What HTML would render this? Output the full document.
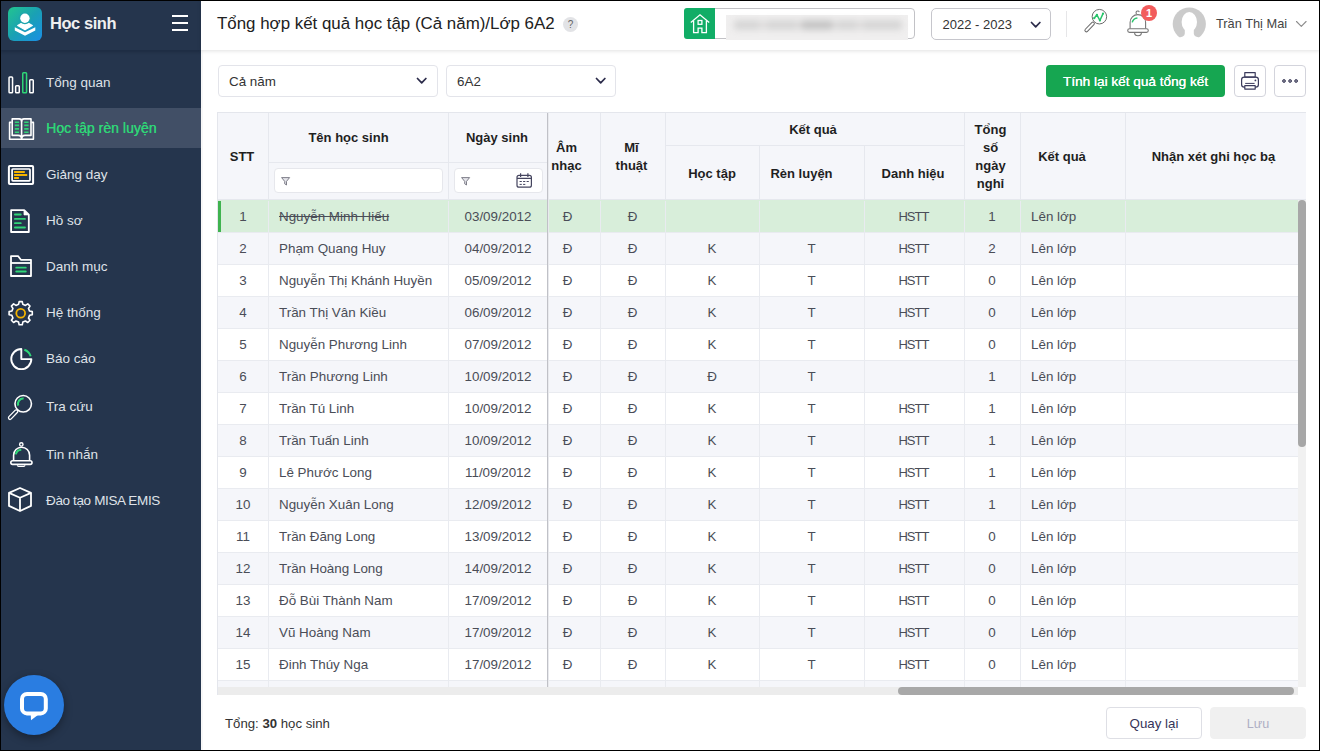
<!DOCTYPE html>
<html lang="vi">
<head>
<meta charset="utf-8">
<title>Tổng hợp kết quả học tập</title>
<style>
*{box-sizing:border-box;margin:0;padding:0}
html,body{width:1320px;height:751px;overflow:hidden;background:#fff}
body{font-family:"Liberation Sans",sans-serif;font-size:13.4px;color:#3c3f46;position:relative}
.frame{position:absolute;left:0;top:0;width:1320px;height:751px;border:1px solid #000;pointer-events:none;z-index:50}
/* sidebar */
.side{position:absolute;left:0;top:0;width:201px;height:751px;background:#25354d}
.side .top{position:absolute;left:0;top:0;width:201px;height:50px;background:#25354d;box-shadow:0 2px 3px rgba(10,20,40,.28)}
.logo{position:absolute;left:8px;top:7px;width:34px;height:34px;border-radius:6px;background:linear-gradient(135deg,#22c58f 0%,#1aa0b4 50%,#1b8fe6 100%)}
.brand{position:absolute;left:50px;top:13px;font-size:16.5px;line-height:20px;font-weight:bold;color:#efefef;letter-spacing:-.45px}
.burger{position:absolute;left:172px;top:14.7px;width:16px;height:17px}
.burger i{display:block;height:2.6px;background:#fff;margin-bottom:4.4px}
.mi{position:absolute;left:0;width:201px;height:40px;color:#dfe2e8;font-size:13.5px}
.mi span{position:absolute;left:46px;top:0;line-height:41px;white-space:nowrap}
.mi svg{position:absolute;left:0;top:0}
.mi.act{background:#414f66}
.mi.act span{color:#2fd577;font-size:14.1px;text-shadow:.35px 0 0 #2fd577}
.chat{position:absolute;left:4px;top:675px;width:60px;height:60px;border-radius:50%;background:#2a7de1;box-shadow:0 3px 8px rgba(0,0,0,.35)}
/* header */
.lstrip{position:absolute;left:201px;top:50px;width:2px;height:700px;background:#f7f7f7}
.hdr{position:absolute;left:201px;top:0;width:1119px;height:50px;background:#fff;box-shadow:0 1px 4px rgba(0,0,0,.12)}
.title{position:absolute;left:16px;top:14px;font-size:16.9px;color:#212121;white-space:nowrap}
.help{position:absolute;left:362px;top:17px;width:15px;height:15px;border-radius:50%;background:#e2e3e6;color:#666;font-size:10px;text-align:center;line-height:15px}
.school{position:absolute;left:483px;top:8px;width:231px;height:31px;border:1px solid #c2c2c6;border-radius:4px;background:#fff}
.schoolg{position:absolute;left:483px;top:8px;width:31px;height:31px;background:#11ad66;border-radius:3px 0 0 3px}
.blurbase{position:absolute;left:525px;top:15px;width:182px;height:25px;background:#f0efef}
.blur{position:absolute;left:528px;top:20px;width:176px;height:11px;filter:blur(3px)}
.blur i{position:absolute;top:0;height:10px;background:#d6d6d6;border-radius:4px}
.year{position:absolute;left:730px;top:8px;width:120px;height:32px;border:1px solid #c6c6cc;border-radius:5px;background:#fff}
.year span{position:absolute;left:10.5px;top:8px;font-size:13px;color:#333}
.vsep{position:absolute;left:865px;top:11px;width:1px;height:26px;background:#e6e6e8}
.badge{position:absolute;left:940px;top:5px;width:16px;height:16px;border-radius:50%;background:#f25c5c;color:#fff;font-size:11px;font-weight:bold;text-align:center;line-height:16px}
.avatar{display:none}
.uname{position:absolute;left:1015px;top:16px;font-size:12.8px;color:#444;white-space:nowrap}
/* toolbar */
.sel{position:absolute;top:65px;height:32px;border:1px solid #e3e4ea;border-radius:4px;background:#fff}
.sel span{position:absolute;left:10px;top:8px;font-size:13.4px;color:#333}
.chev{}
.btng{position:absolute;left:1046px;top:65px;width:179px;height:32px;border-radius:4px;background:#16a651;color:#fff;font-size:13.6px;text-align:center;line-height:33px;text-shadow:.15px 0 0 #fff}
.ibtn{position:absolute;top:65px;width:32px;height:32px;border:1px solid #d3d4dc;border-radius:4px;background:#fff}
/* table */
.tbl{position:absolute;left:217px;top:112px;width:1089px;height:583px;border-left:1px solid #e4e6ec;border-top:1px solid #e4e6ec;background:#fff;overflow:hidden}
.thbg{position:absolute;left:0;top:0;width:1088px;height:87px;background:#f5f6fa}
.th{padding-top:1px;position:absolute;border-right:1px solid #e6e8ee;border-bottom:1px solid #e6e8ee;font-weight:bold;color:#1f1f1f;font-size:13px;display:flex;align-items:center;justify-content:center;text-align:center;line-height:18px}
.fin{position:absolute;height:25px;border:1px solid #e6e7ec;border-radius:4px;background:#fff}
.row{position:absolute;left:0;width:1080px;height:32px;border-bottom:1px solid #e9ebf0;overflow:hidden}
.row.alt{background:#f5f6fa}
.row.sel1{background:#d8eeda;box-shadow:0 -1px 0 #d8eeda}
.row.sel1:before{content:"";position:absolute;left:0;top:-1px;width:3px;height:33px;background:#3fb34f}
.c{position:absolute;top:0;height:32px;line-height:31px;border-right:1px solid #e9ebf0;text-align:center;white-space:nowrap;color:#4a4d57}
.c.hs{font-size:13px;letter-spacing:-.95px;padding-right:1px}
.c.am{padding-right:13px}
.c.l{text-align:left;padding-left:11px}
.freeze{position:absolute;left:329px;top:0;width:1px;height:574px;background:#c0c1c7;box-shadow:1px 0 0 #e9eaee}
.vsb{position:absolute;left:1080px;top:87px;width:8px;height:247px;border-radius:4px;background:#a7a7a7}
.vsbt{position:absolute;left:1080px;top:87px;width:8px;height:487px;background:#f1f1f1}
.hsb{position:absolute;left:680px;top:574px;width:396px;height:8px;border-radius:4px;background:#a8a8a8}
.hsbt{position:absolute;left:0;top:574px;width:1080px;height:8px;background:#ececec}
.foot{position:absolute;left:225px;top:716px;font-size:13.2px;color:#333}
.fb{position:absolute;top:707px;width:96px;height:32px;border-radius:4px;text-align:center;line-height:31px;font-size:13.3px}
.fb.a{left:1106px;border:1px solid #dedfe5;background:#fff;color:#35355a}
.fb.b{left:1210px;background:#f0f0f0;color:#aeaec4;border:1px solid #f0f0f0}
</style>
</head>
<body>
<div class="side"><div class="top"><div class="logo"><svg width="34" height="34" viewBox="0 0 34 34"><path d="M17 14.300L24.300 18.600L17 22.800L9.700 18.600Z" fill="#fff" stroke="#fff" stroke-width="1.200" stroke-linejoin="round"/><circle cx="16.900" cy="11.300" r="6" fill="#1fa5ad"/><circle cx="16.900" cy="11.300" r="4.700" fill="#fff"/><path d="M6.800 20.200L17 25.200L27.300 20.200V23.400L17 28.700L6.800 23.400Z" fill="#fff"/></svg></div><div class="brand">Học sinh</div><div class="burger"><i></i><i></i><i></i></div></div>
<div class="mi" style="top:62px"><svg width="44" height="40" viewBox="0 0 44 40" fill="none" stroke="#fff" stroke-width="1.5" stroke-linejoin="round" stroke-linecap="butt"><rect x="9.050" y="15.050" width="3.500" height="15.800" rx=".8"/><rect x="15.650" y="23.750" width="3.600" height="7.100" rx=".8"/><rect x="22.750" y="10.750" width="3.800" height="20.100" rx=".8" stroke="#2fd577"/><rect x="29.750" y="17.750" width="3.500" height="13.100" rx=".8"/></svg><span>Tổng quan</span></div>
<div class="mi act" style="top:108px"><svg width="44" height="40" viewBox="0 0 44 40" fill="none" stroke="#fff" stroke-width="1.6" stroke-linejoin="round" stroke-linecap="butt"><path d="M11.600 14.400H9.600V31.200H33.400V14.400H31.400"/><path d="M12.200 10.900H19.200Q21.600 10.900 21.600 13.200Q21.600 10.900 24 10.900H31V27.400H25Q21.600 27.400 21.600 30.800Q21.600 27.400 18.200 27.400H12.200Z"/><path d="M21.600 13V30.500"/><path d="M14.800 14.200H19M14.800 17.400H19M14.800 20.900H19M14.800 24.200H19M24.200 14.200H28.600M24.200 17.400H28.600M24.200 20.900H28.600M24.200 24.200H28.600" stroke="#2fd577" stroke-width="1.600"/></svg><span>Học tập rèn luyện</span></div>
<div class="mi" style="top:154px"><svg width="44" height="40" viewBox="0 0 44 40" fill="none" stroke="#fff" stroke-width="2" stroke-linejoin="round" stroke-linecap="butt"><rect x="8.900" y="11.900" width="24.200" height="18" rx="1"/><rect x="12.100" y="15" width="17.900" height="11.800" rx=".8" stroke-width="1.700"/><path d="M14.100 18H24.800M14.100 21H27.200M14.100 24H18.900" stroke="#f5b400" stroke-width="1.900"/></svg><span>Giảng dạy</span></div>
<div class="mi" style="top:200px"><svg width="44" height="40" viewBox="0 0 44 40" fill="none" stroke="#fff" stroke-width="1.8" stroke-linejoin="round" stroke-linecap="butt"><path d="M11.100 10.050H24.200L28.800 14.700V32H11.100Z"/><path d="M24 10.300V14.900H28.600Z" fill="#fff" stroke-width=".8"/><path d="M14.900 14.500H20.800M14.900 18.900H25M14.900 23.200H20.800M14.900 27.500H25" stroke="#2fd577" stroke-width="1.800" stroke-linecap="round"/></svg><span>Hồ sơ</span></div>
<div class="mi" style="top:246px"><svg width="44" height="40" viewBox="0 0 44 40" fill="none" stroke="#fff" stroke-width="1.8" stroke-linejoin="round" stroke-linecap="butt"><path d="M11 10.050H18L20.900 13.800H31V30H11Z"/><path d="M11 17H31"/><path d="M16.200 21.700H25.800M16.200 25.500H25.800" stroke="#2fd577" stroke-width="1.800" stroke-linecap="round"/></svg><span>Danh mục</span></div>
<div class="mi" style="top:292px"><svg width="44" height="40" viewBox="0 0 44 40" fill="none" stroke="#fff" stroke-width="2" stroke-linejoin="round" stroke-linecap="butt"><path d="M19.14 9.60 L22.26 9.60 L22.82 12.35 L25.45 13.44 L27.80 11.90 L30.00 14.10 L28.46 16.45 L29.55 19.08 L32.30 19.64 L32.30 22.76 L29.55 23.32 L28.46 25.95 L30.00 28.30 L27.80 30.50 L25.45 28.96 L22.82 30.05 L22.26 32.80 L19.14 32.80 L18.58 30.05 L15.95 28.96 L13.60 30.50 L11.40 28.30 L12.94 25.95 L11.85 23.32 L9.10 22.76 L9.10 19.64 L11.85 19.08 L12.94 16.45 L11.40 14.10 L13.60 11.90 L15.95 13.44 L18.58 12.35Z" stroke-width="1.600"/><circle cx="20.700" cy="21.300" r="4.400" stroke="#f5b400" stroke-width="1.800"/></svg><span>Hệ thống</span></div>
<div class="mi" style="top:338px"><svg width="44" height="40" viewBox="0 0 44 40" fill="none" stroke="#fff" stroke-width="1.9" stroke-linejoin="round" stroke-linecap="butt"><path d="M21.300 11.050V21.100H31.350A10.050 10.050 0 1 1 21.300 11.050Z"/><path d="M24.33 11.78A9.8 9.8 0 0 1 30.67 18.23" stroke="#2fd577" stroke-width="2"/></svg><span>Báo cáo</span></div>
<div class="mi" style="top:386px"><svg width="44" height="40" viewBox="0 0 44 40" fill="none" stroke="#fff" stroke-width="1.6" stroke-linejoin="round" stroke-linecap="butt"><circle cx="23.200" cy="17.800" r="8.250"/><rect x="-1.600" y="0" width="3.200" height="12" rx="1.600" transform="translate(17.300 24.300) rotate(44)" stroke-width="1.300"/><path d="M18.22 19.61A5.3 5.3 0 0 1 23.66 12.52" stroke="#2fd577" stroke-width="2.100"/></svg><span>Tra cứu</span></div>
<div class="mi" style="top:434px"><svg width="44" height="40" viewBox="0 0 44 40" fill="none" stroke="#fff" stroke-width="1.6" stroke-linejoin="round" stroke-linecap="butt"><circle cx="21.300" cy="10.400" r="1.700" stroke-width="1.400"/><path d="M13.600 26.500V21.200A8 8 0 0 1 29.600 21.200V26.500"/><rect x="10.800" y="26.800" width="21.200" height="3.600" rx="1.800"/><path d="M17.500 31.200V31.600Q17.500 32.400 18.500 32.400H23.800Q24.800 32.400 24.800 31.600V31.200" stroke-width="1.300"/><path d="M15.83 20.39A5.8 5.8 0 0 1 21.30 15.80" stroke="#2fd577" stroke-width="2.100"/></svg><span>Tin nhắn</span></div>
<div class="mi" style="top:480px"><svg width="44" height="40" viewBox="0 0 44 40" fill="none" stroke="#fff" stroke-width="1.8" stroke-linejoin="round" stroke-linecap="butt"><path d="M20 8L31 12.900V25.900L20 31L9 25.900V12.900Z"/><path d="M9 12.900L20 17.700L31 12.900M20 17.700V31"/></svg><span style="letter-spacing:-.36px">Đào tạo MISA EMIS</span></div>
<div class="chat"><svg width="60" height="60" viewBox="0 0 60 60"><path d="M26.700 38L27 45.200L36.500 38Z" fill="#fff"/><rect x="18" y="18.900" width="23.800" height="19.500" rx="5" fill="none" stroke="#fff" stroke-width="4"/></svg></div></div>
<div class="lstrip"></div>
<div class="hdr"><div class="title">Tổng hợp kết quả học tập (Cả năm)/Lớp 6A2</div><div class="help">?</div>
<div class="school"></div>
<div class="schoolg"><svg width="31" height="31" viewBox="684 8 31 31" fill="none" stroke="#fff" stroke-width="1.300" stroke-linejoin="miter"><path d="M690.800 22.400L700 14.800L709.200 22.400"/><path d="M693.600 20.800V32.700H698.100V28.200H701.900V32.700H706.400V20.800"/><rect x="698.100" y="20.500" width="3.800" height="3.800"/></svg></div>
<div class="blurbase"></div><div class="blur"><i style="left:4px;width:170px;background:#e0dfdf"></i><i style="left:6px;width:24px"></i><i style="left:38px;width:30px"></i><i style="left:72px;width:32px;background:#c6c6c6"></i><i style="left:108px;width:20px"></i><i style="left:134px;width:38px"></i></div>
<div class="year"><span>2022 - 2023</span></div><svg style="position:absolute;left:829.3px;top:20.5px" width="11.4" height="7.4" viewBox="-1.500 -1.500 11.4 7.4" fill="none" stroke="#2b2b4a" stroke-width="1.7" stroke-linecap="round" stroke-linejoin="round"><path d="M0 0L4.2 4.4L8.4 0"/></svg><div class="vsep"></div>
<svg style="position:absolute;left:879px;top:4px" width="32" height="32" viewBox="1080 4 32 32" fill="none" stroke="#6a6a6a" stroke-width="1" stroke-linejoin="round"><circle cx="1099.400" cy="16.700" r="7.250"/><rect x="-1.500" y="0" width="3" height="12.300" rx="1.500" transform="translate(1093.900 22.500) rotate(44)"/><path d="M1094.200 18.200L1096.900 14.800L1099.900 20.500L1103 13.600" stroke="#27c46a" stroke-width="1.500"/><g fill="#27c46a" stroke="none"><circle cx="1094.200" cy="18.200" r="1.100"/><circle cx="1096.900" cy="14.800" r="1.100"/><circle cx="1099.900" cy="20.500" r="1.100"/><circle cx="1103" cy="13.600" r="1.100"/></g></svg>
<svg style="position:absolute;left:921px;top:6px" width="32" height="34" viewBox="1122 6 32 34" fill="none" stroke="#777" stroke-width="1.100" stroke-linejoin="round"><path d="M1139.200 12.200A1.600 1.600 0 1 0 1136.600 13.800"/><path d="M1130.100 28.600V22.400A7.750 7.750 0 0 1 1145.600 22.400V28.600"/><rect x="1127.700" y="28.700" width="20.600" height="3.700" rx="1.850"/><path d="M1134.600 32.700A3.400 3 0 0 0 1141.400 32.700"/><path d="M1132.200 22.400A6 6 0 0 1 1137.400 18.100" stroke="#27c46a" stroke-width="1.500"/></svg>
<div class="badge">1</div>
<svg style="position:absolute;left:969px;top:5px" width="40" height="40" viewBox="1170 5 40 40"><circle cx="1189.300" cy="24" r="16.600" fill="#cbcbcb"/><g fill="#fff"><ellipse cx="1189.300" cy="22" rx="7.700" ry="9.900"/><path d="M1184.800 29V33.500Q1184.800 37.200 1177 37.900L1170 38V44H1209V38L1201.600 37.900Q1193.800 37.200 1193.800 33.500V29Z"/></g></svg>
<div class="uname">Trần Thị Mai</div>
<svg style="position:absolute;left:1094.3px;top:20.0px" width="12.6" height="7.8" viewBox="-1.500 -1.500 12.6 7.8" fill="none" stroke="#8c8c8c" stroke-width="1.1" stroke-linecap="round" stroke-linejoin="round"><path d="M0 0L4.8 4.8L9.6 0"/></svg>
</div>
<div class="sel" style="left:218px;width:220px"><span>Cả năm</span><svg style="position:absolute;left:197.0px;top:11.0px" width="11.4" height="7.4" viewBox="-1.500 -1.500 11.4 7.4" fill="none" stroke="#2b2b4a" stroke-width="1.7" stroke-linecap="round" stroke-linejoin="round"><path d="M0 0L4.2 4.4L8.4 0"/></svg></div>
<div class="sel" style="left:446px;width:170px"><span>6A2</span><svg style="position:absolute;left:147.5px;top:11.0px" width="11.4" height="7.4" viewBox="-1.500 -1.500 11.4 7.4" fill="none" stroke="#2b2b4a" stroke-width="1.7" stroke-linecap="round" stroke-linejoin="round"><path d="M0 0L4.2 4.4L8.4 0"/></svg></div>
<div class="btng">Tính lại kết quả tổng kết</div>
<div class="ibtn" style="left:1234px"><svg style="position:absolute;left:-1px;top:-1px" width="32" height="32" viewBox="1234 65 32 32" fill="none" stroke="#3a3a5c" stroke-width="1.200" stroke-linejoin="round"><rect x="1244.800" y="72.600" width="10.400" height="4.600"/><rect x="1241.600" y="77.200" width="16.800" height="10" rx="2.600"/><rect x="1244.800" y="85.700" width="10.400" height="3.400" fill="#fff"/><path d="M1245.200 83.400H1254.600" stroke-width="1"/><circle cx="1255.400" cy="80.400" r=".9" fill="#3a3a5c" stroke="none"/></svg></div>
<div class="ibtn" style="left:1274px"><svg style="position:absolute;left:-1px;top:-1px" width="32" height="32" viewBox="1274 65 32 32" fill="#8a8a9a" stroke="#444460" stroke-width="1"><circle cx="1284" cy="81" r="1.400"/><circle cx="1290.100" cy="81" r="1.400"/><circle cx="1296.100" cy="81" r="1.400"/></svg></div>
<div class="tbl"><div class="thbg"></div><div class="th" style="left:0px;top:0px;width:51px;height:87px;padding-right:2px">STT</div><div class="th" style="left:50px;top:0px;width:181px;height:50px;padding-right:19px">Tên học sinh</div><div class="th" style="left:50px;top:50px;width:181px;height:37px;"></div><div class="th" style="left:230px;top:0px;width:101px;height:50px;padding-right:2px">Ngày sinh</div><div class="th" style="left:230px;top:50px;width:101px;height:37px;"></div><div class="th" style="left:330px;top:0px;width:53px;height:87px;padding-right:15px">Âm<br>nhạc</div><div class="th" style="left:382px;top:0px;width:66px;height:87px;padding-right:2px">Mĩ<br>thuật</div><div class="th" style="left:447px;top:0px;width:300px;height:33px;padding-right:3px">Kết quả</div><div class="th" style="left:447px;top:33px;width:95px;height:54px;padding-top:3px">Học tập</div><div class="th" style="left:541px;top:33px;width:106px;height:54px;padding-right:20px;padding-top:3px">Rèn luyện</div><div class="th" style="left:646px;top:33px;width:101px;height:54px;padding-right:2px;padding-top:3px">Danh hiệu</div><div class="th" style="left:746px;top:0px;width:57px;height:87px;padding-right:3px">Tổng<br>số<br>ngày<br>nghỉ</div><div class="th" style="left:802px;top:0px;width:106px;height:87px;padding-right:21px">Kết quả</div><div class="th" style="left:907px;top:0px;width:182px;height:87px;padding-right:4px">Nhận xét ghi học bạ</div><div class="fin" style="left:56px;top:55px;width:169px"></div><svg style="position:absolute;left:62.69999999999999px;top:63.599999999999994px" width="10" height="10" viewBox="0 0 10 10" fill="#e4e4ea" stroke="#72727e" stroke-width=".9" stroke-linejoin="round"><path d="M.6 .6H8.600L5.500 4.400V8L3.700 6.800V4.400Z"/></svg><div class="fin" style="left:236px;top:55px;width:89px"></div><svg style="position:absolute;left:242.7px;top:63.599999999999994px" width="10" height="10" viewBox="0 0 10 10" fill="#e4e4ea" stroke="#72727e" stroke-width=".9" stroke-linejoin="round"><path d="M.6 .6H8.600L5.500 4.400V8L3.700 6.800V4.400Z"/></svg><svg style="position:absolute;left:296px;top:58px" width="20" height="20" viewBox="514 171 20 20" fill="none" stroke="#45455f" stroke-width="1.200"><rect x="517" y="175.400" width="14.400" height="11.800" rx="2"/><path d="M517 178.300H531.400M520.600 173.300V177M527.900 173.300V177"/><path d="M519.600 181.500H521.800M523.100 181.500H525.300M526.600 181.500H528.800M519.600 184.400H521.800M523.100 184.400H525.300" stroke-width="1"/></svg><div class="row sel1" style="top:88px"><div class="c" style="left:0px;width:51px">1</div><div class="c l" style="left:50px;width:181px"><s>Nguyễn Minh Hiếu</s></div><div class="c" style="left:230px;width:101px">03/09/2012</div><div class="c am" style="left:330px;width:53px">Đ</div><div class="c" style="left:382px;width:66px">Đ</div><div class="c" style="left:447px;width:95px"></div><div class="c" style="left:541px;width:106px"></div><div class="c hs" style="left:646px;width:101px">HSTT</div><div class="c" style="left:746px;width:57px">1</div><div class="c l" style="left:802px;width:106px">Lên lớp</div><div class="c" style="left:907px;width:181px"></div></div>
<div class="row alt" style="top:120px"><div class="c" style="left:0px;width:51px">2</div><div class="c l" style="left:50px;width:181px">Phạm Quang Huy</div><div class="c" style="left:230px;width:101px">04/09/2012</div><div class="c am" style="left:330px;width:53px">Đ</div><div class="c" style="left:382px;width:66px">Đ</div><div class="c" style="left:447px;width:95px">K</div><div class="c" style="left:541px;width:106px">T</div><div class="c hs" style="left:646px;width:101px">HSTT</div><div class="c" style="left:746px;width:57px">2</div><div class="c l" style="left:802px;width:106px">Lên lớp</div><div class="c" style="left:907px;width:181px"></div></div>
<div class="row" style="top:152px"><div class="c" style="left:0px;width:51px">3</div><div class="c l" style="left:50px;width:181px">Nguyễn Thị Khánh Huyền</div><div class="c" style="left:230px;width:101px">05/09/2012</div><div class="c am" style="left:330px;width:53px">Đ</div><div class="c" style="left:382px;width:66px">Đ</div><div class="c" style="left:447px;width:95px">K</div><div class="c" style="left:541px;width:106px">T</div><div class="c hs" style="left:646px;width:101px">HSTT</div><div class="c" style="left:746px;width:57px">0</div><div class="c l" style="left:802px;width:106px">Lên lớp</div><div class="c" style="left:907px;width:181px"></div></div>
<div class="row alt" style="top:184px"><div class="c" style="left:0px;width:51px">4</div><div class="c l" style="left:50px;width:181px">Trần Thị Vân Kiều</div><div class="c" style="left:230px;width:101px">06/09/2012</div><div class="c am" style="left:330px;width:53px">Đ</div><div class="c" style="left:382px;width:66px">Đ</div><div class="c" style="left:447px;width:95px">K</div><div class="c" style="left:541px;width:106px">T</div><div class="c hs" style="left:646px;width:101px">HSTT</div><div class="c" style="left:746px;width:57px">0</div><div class="c l" style="left:802px;width:106px">Lên lớp</div><div class="c" style="left:907px;width:181px"></div></div>
<div class="row" style="top:216px"><div class="c" style="left:0px;width:51px">5</div><div class="c l" style="left:50px;width:181px">Nguyễn Phương Linh</div><div class="c" style="left:230px;width:101px">07/09/2012</div><div class="c am" style="left:330px;width:53px">Đ</div><div class="c" style="left:382px;width:66px">Đ</div><div class="c" style="left:447px;width:95px">K</div><div class="c" style="left:541px;width:106px">T</div><div class="c hs" style="left:646px;width:101px">HSTT</div><div class="c" style="left:746px;width:57px">0</div><div class="c l" style="left:802px;width:106px">Lên lớp</div><div class="c" style="left:907px;width:181px"></div></div>
<div class="row alt" style="top:248px"><div class="c" style="left:0px;width:51px">6</div><div class="c l" style="left:50px;width:181px">Trần Phương Linh</div><div class="c" style="left:230px;width:101px">10/09/2012</div><div class="c am" style="left:330px;width:53px">Đ</div><div class="c" style="left:382px;width:66px">Đ</div><div class="c" style="left:447px;width:95px">Đ</div><div class="c" style="left:541px;width:106px">T</div><div class="c hs" style="left:646px;width:101px"></div><div class="c" style="left:746px;width:57px">1</div><div class="c l" style="left:802px;width:106px">Lên lớp</div><div class="c" style="left:907px;width:181px"></div></div>
<div class="row" style="top:280px"><div class="c" style="left:0px;width:51px">7</div><div class="c l" style="left:50px;width:181px">Trần Tú Linh</div><div class="c" style="left:230px;width:101px">10/09/2012</div><div class="c am" style="left:330px;width:53px">Đ</div><div class="c" style="left:382px;width:66px">Đ</div><div class="c" style="left:447px;width:95px">K</div><div class="c" style="left:541px;width:106px">T</div><div class="c hs" style="left:646px;width:101px">HSTT</div><div class="c" style="left:746px;width:57px">1</div><div class="c l" style="left:802px;width:106px">Lên lớp</div><div class="c" style="left:907px;width:181px"></div></div>
<div class="row alt" style="top:312px"><div class="c" style="left:0px;width:51px">8</div><div class="c l" style="left:50px;width:181px">Trần Tuấn Linh</div><div class="c" style="left:230px;width:101px">10/09/2012</div><div class="c am" style="left:330px;width:53px">Đ</div><div class="c" style="left:382px;width:66px">Đ</div><div class="c" style="left:447px;width:95px">K</div><div class="c" style="left:541px;width:106px">T</div><div class="c hs" style="left:646px;width:101px">HSTT</div><div class="c" style="left:746px;width:57px">1</div><div class="c l" style="left:802px;width:106px">Lên lớp</div><div class="c" style="left:907px;width:181px"></div></div>
<div class="row" style="top:344px"><div class="c" style="left:0px;width:51px">9</div><div class="c l" style="left:50px;width:181px">Lê Phước Long</div><div class="c" style="left:230px;width:101px">11/09/2012</div><div class="c am" style="left:330px;width:53px">Đ</div><div class="c" style="left:382px;width:66px">Đ</div><div class="c" style="left:447px;width:95px">K</div><div class="c" style="left:541px;width:106px">T</div><div class="c hs" style="left:646px;width:101px">HSTT</div><div class="c" style="left:746px;width:57px">1</div><div class="c l" style="left:802px;width:106px">Lên lớp</div><div class="c" style="left:907px;width:181px"></div></div>
<div class="row alt" style="top:376px"><div class="c" style="left:0px;width:51px">10</div><div class="c l" style="left:50px;width:181px">Nguyễn Xuân Long</div><div class="c" style="left:230px;width:101px">12/09/2012</div><div class="c am" style="left:330px;width:53px">Đ</div><div class="c" style="left:382px;width:66px">Đ</div><div class="c" style="left:447px;width:95px">K</div><div class="c" style="left:541px;width:106px">T</div><div class="c hs" style="left:646px;width:101px">HSTT</div><div class="c" style="left:746px;width:57px">1</div><div class="c l" style="left:802px;width:106px">Lên lớp</div><div class="c" style="left:907px;width:181px"></div></div>
<div class="row" style="top:408px"><div class="c" style="left:0px;width:51px">11</div><div class="c l" style="left:50px;width:181px">Trần Đăng Long</div><div class="c" style="left:230px;width:101px">13/09/2012</div><div class="c am" style="left:330px;width:53px">Đ</div><div class="c" style="left:382px;width:66px">Đ</div><div class="c" style="left:447px;width:95px">K</div><div class="c" style="left:541px;width:106px">T</div><div class="c hs" style="left:646px;width:101px">HSTT</div><div class="c" style="left:746px;width:57px">0</div><div class="c l" style="left:802px;width:106px">Lên lớp</div><div class="c" style="left:907px;width:181px"></div></div>
<div class="row alt" style="top:440px"><div class="c" style="left:0px;width:51px">12</div><div class="c l" style="left:50px;width:181px">Trần Hoàng Long</div><div class="c" style="left:230px;width:101px">14/09/2012</div><div class="c am" style="left:330px;width:53px">Đ</div><div class="c" style="left:382px;width:66px">Đ</div><div class="c" style="left:447px;width:95px">K</div><div class="c" style="left:541px;width:106px">T</div><div class="c hs" style="left:646px;width:101px">HSTT</div><div class="c" style="left:746px;width:57px">0</div><div class="c l" style="left:802px;width:106px">Lên lớp</div><div class="c" style="left:907px;width:181px"></div></div>
<div class="row" style="top:472px"><div class="c" style="left:0px;width:51px">13</div><div class="c l" style="left:50px;width:181px">Đỗ Bùi Thành Nam</div><div class="c" style="left:230px;width:101px">17/09/2012</div><div class="c am" style="left:330px;width:53px">Đ</div><div class="c" style="left:382px;width:66px">Đ</div><div class="c" style="left:447px;width:95px">K</div><div class="c" style="left:541px;width:106px">T</div><div class="c hs" style="left:646px;width:101px">HSTT</div><div class="c" style="left:746px;width:57px">0</div><div class="c l" style="left:802px;width:106px">Lên lớp</div><div class="c" style="left:907px;width:181px"></div></div>
<div class="row alt" style="top:504px"><div class="c" style="left:0px;width:51px">14</div><div class="c l" style="left:50px;width:181px">Vũ Hoàng Nam</div><div class="c" style="left:230px;width:101px">17/09/2012</div><div class="c am" style="left:330px;width:53px">Đ</div><div class="c" style="left:382px;width:66px">Đ</div><div class="c" style="left:447px;width:95px">K</div><div class="c" style="left:541px;width:106px">T</div><div class="c hs" style="left:646px;width:101px">HSTT</div><div class="c" style="left:746px;width:57px">0</div><div class="c l" style="left:802px;width:106px">Lên lớp</div><div class="c" style="left:907px;width:181px"></div></div>
<div class="row" style="top:536px"><div class="c" style="left:0px;width:51px">15</div><div class="c l" style="left:50px;width:181px">Đinh Thúy Nga</div><div class="c" style="left:230px;width:101px">17/09/2012</div><div class="c am" style="left:330px;width:53px">Đ</div><div class="c" style="left:382px;width:66px">Đ</div><div class="c" style="left:447px;width:95px">K</div><div class="c" style="left:541px;width:106px">T</div><div class="c hs" style="left:646px;width:101px">HSTT</div><div class="c" style="left:746px;width:57px">0</div><div class="c l" style="left:802px;width:106px">Lên lớp</div><div class="c" style="left:907px;width:181px"></div></div>
<div class="row alt" style="top:568px"><div class="c" style="left:0px;width:51px"></div><div class="c l" style="left:50px;width:181px"></div><div class="c" style="left:230px;width:101px"></div><div class="c am" style="left:330px;width:53px"></div><div class="c" style="left:382px;width:66px"></div><div class="c" style="left:447px;width:95px"></div><div class="c" style="left:541px;width:106px"></div><div class="c hs" style="left:646px;width:101px"></div><div class="c" style="left:746px;width:57px"></div><div class="c l" style="left:802px;width:106px"></div><div class="c" style="left:907px;width:181px"></div></div>
<div class="freeze"></div><div class="vsbt"></div><div class="hsbt"></div><div class="hsb"></div><div class="vsb"></div></div>
<div class="foot">Tổng: <b>30</b> học sinh</div><div class="fb a">Quay lại</div><div class="fb b"><span style="font-size:12.6px">Lưu</span></div>
<div class="frame"></div>
</body>
</html>
